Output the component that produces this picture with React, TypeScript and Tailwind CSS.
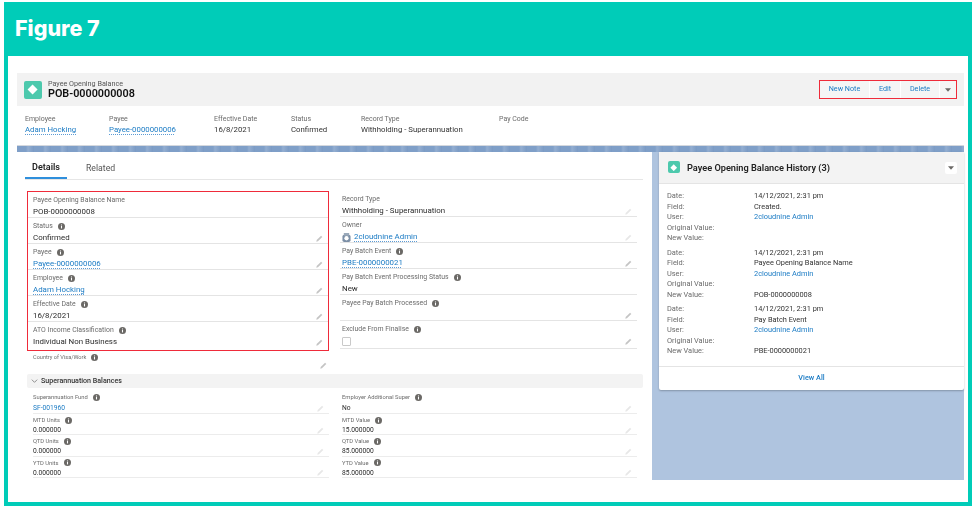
import React from "react";

const Info = () => (
  <svg viewBox="0 0 8 8" className="ml-[5px] h-[7px] w-[7px] shrink-0">
    <circle cx="4" cy="4" r="4" fill="#6b6966" />
    <rect x="3.4" y="3.4" width="1.2" height="2.8" fill="#fff" />
    <rect x="3.4" y="1.7" width="1.2" height="1.1" fill="#fff" />
  </svg>
);

const PencilIcon = ({ faint }: { faint?: boolean }) => (
  <svg viewBox="0 0 10 10" className={"h-[7px] w-[7px] shrink-0 " + (faint ? "opacity-40" : "")}>
    <path d="M0.5 9.5 L1 7.2 L7.2 1 L9 2.8 L2.8 9 Z" fill="#c4c4c4" />
  </svg>
);

const Link = ({ children }: { children: React.ReactNode }) => (
  <span className="text-[#1b7bc4] underline decoration-[#5b9bd5] decoration-dotted underline-offset-[1.5px]">{children}</span>
);

type F = { label: string; value?: React.ReactNode; info?: boolean; edit?: boolean; faint?: boolean };

const Field = ({ label, value, info = true, edit = true, faint }: F) => (
  <div className="h-[26px] border-b border-[#e4e4e4] px-[5px] pt-[3.5px]">
    <div className="flex h-[9px] items-center text-[6.9px] leading-[9px] text-[#6b6b6b]">
      {label}
      {info && <Info />}
    </div>
    <div className="mt-[1.5px] flex h-[12px] items-center justify-between text-[7.9px] leading-[12px] text-[#2b2b2b]">
      <div className="flex items-center">{value}</div>
      {edit && <PencilIcon faint={faint} />}
    </div>
  </div>
);

const Small = ({ label, value, tall }: { label: string; value: React.ReactNode; tall?: boolean }) => (
  <div className={"border-b border-[#ececec] pr-[5px] " + (tall ? "h-[21px]" : "h-[21.33px] pt-[2px]")}>
    <div className="flex h-[8px] items-center text-[5.8px] leading-[8px] text-[#6b6b6b]">
      {label}
      <Info />
    </div>
    <div className={"flex h-[10px] items-center justify-between text-[6.7px] leading-[10px] text-[#2b2b2b] " + (tall ? "mt-[2px]" : "mt-[1px]")}>
      <div>{value}</div>
      <PencilIcon faint />
    </div>
  </div>
);

const Diamond = ({ size }: { size: string }) => (
  <span className={"flex shrink-0 items-center justify-center rounded-[2px] bg-[#4dc9ad] " + size}>
    <svg viewBox="0 0 10 10" className="h-[62%] w-[62%]">
      <path d="M5 0.5 L9.5 5 L5 9.5 L0.5 5 Z" fill="#fff" />
    </svg>
  </span>
);

const Caret = () => (
  <svg viewBox="0 0 10 6" className="h-[4px] w-[6px]">
    <path d="M0 0 H10 L5 6 Z" fill="#6b6966" />
  </svg>
);

const History = ({ field, value }: { field: string; value?: string }) => (
  <div className="grid grid-cols-[87px_1fr] text-[7.4px] leading-[10.5px] text-[#6b6b6b]">
    <div>Date:</div>
    <div className="text-[#333]">14/12/2021, 2:31 pm</div>
    <div>Field:</div>
    <div className="text-[#333]">{field}</div>
    <div>User:</div>
    <div className="text-[#1b7bc4]">2cloudnine Admin</div>
    <div className="col-span-2">Original Value:</div>
    <div>New Value:</div>
    <div className="text-[#333]">{value}</div>
  </div>
);

const Highlight = ({ label, value, w }: { label: string; value?: React.ReactNode; w: string }) => (
  <div className={"flex shrink-0 flex-col " + w}>
    <div className="h-[9px] text-[7px] leading-[9px] text-[#6b6b6b]">{label}</div>
    <div className="h-[11px] text-[7.8px] leading-[11px] text-[#333]">{value}</div>
  </div>
);

const Btn = ({ children, w }: { children: React.ReactNode; w: string }) => (
  <div className={"flex h-full items-center justify-center border-r border-white text-[7.2px] text-[#1b7bc4] " + w}>
    {children}
  </div>
);

export default function App() {
  return (
    <div className="h-[510px] w-[976px] overflow-hidden bg-white pt-[2px] pl-[4px] font-['Roboto','Liberation_Sans',sans-serif]">
      <div className="flex h-[504px] w-[968px] flex-col bg-[#00ccb8] pb-[4px]">
        <div className="flex h-[54px] shrink-0 items-center pl-[11px] font-['Inter',sans-serif] text-[21.5px] font-extrabold leading-none text-white">
          Figure 7
        </div>
        <div className="mx-[4px] flex flex-1 flex-col bg-white pt-[17px] pb-[22px] pl-[9px] pr-[4px] blur-[0.35px]">
          <div className="flex h-[33px] shrink-0 items-center justify-between bg-[#f2f2f2] px-[7px]">
            <div className="flex items-center gap-[6px]">
              <Diamond size="h-[18px] w-[18px]" />
              <div>
                <div className="text-[7.2px] leading-[9px] text-[#555]">Payee Opening Balance</div>
                <div className="text-[10.8px] font-semibold leading-[12px] text-[#111]">POB-0000000008</div>
              </div>
            </div>
            <div className="flex h-[19px] w-[138px] items-center border-[1.5px] border-[#ef2b3a] bg-[#f5f5f5]">
              <Btn w="w-[50px]">New Note</Btn>
              <Btn w="w-[31px]">Edit</Btn>
              <Btn w="w-[39px]">Delete</Btn>
              <div className="flex flex-1 items-center justify-center">
                <Caret />
              </div>
            </div>
          </div>
          <div className="flex h-[39px] shrink-0 items-start pl-[8px] pt-[9px]">
            <Highlight w="w-[84px]" label="Employee" value={<Link>Adam Hocking</Link>} />
            <Highlight w="w-[105px]" label="Payee" value={<Link>Payee-0000000006</Link>} />
            <Highlight w="w-[77px]" label="Effective Date" value="16/8/2021" />
            <Highlight w="w-[70px]" label="Status" value="Confirmed" />
            <Highlight w="w-[138px]" label="Record Type" value="Withholding - Superannuation" />
            <Highlight w="w-[100px]" label="Pay Code" />
          </div>
          <div className="h-[7px] shrink-0 border-t border-[#d4d8de] bg-[#7f9fc8] bg-[repeating-linear-gradient(90deg,#7f9fc8_0px,#7f9fc8_9px,#93aed1_11px,#7a9ac4_17px)]" />
          <div className="flex flex-1 gap-[7px] bg-[#afc4df]">
            <div className="w-[635px] shrink-0 bg-white pl-[8px] pr-[9px]">
              <div className="flex h-[28px] items-end border-b border-[#e6e6e6] pr-[1px]">
                <div className="flex h-full w-[42px] items-center justify-center border-b-2 border-[#2f8fdc] pt-[6px] text-[9px] font-semibold text-[#222]">
                  Details
                </div>
                <div className="ml-[19px] flex h-full items-center pt-[6px] text-[8.7px] text-[#555]">Related</div>
              </div>
              <div className="mt-[11px] ml-[2px] grid grid-cols-[302px_1fr] gap-x-[11px]">
                <div>
                  <div className="flex h-[160px] flex-col border-[1.5px] border-[#ef2b3a] [&>*:last-child]:h-[28px] [&>*:last-child]:border-b-0">
                    <Field label="Payee Opening Balance Name" value="POB-0000000008" info={false} edit={false} />
                    <Field label="Status" value="Confirmed" />
                    <Field label="Payee" value={<Link>Payee-0000000006</Link>} />
                    <Field label="Employee" value={<Link>Adam Hocking</Link>} />
                    <Field label="Effective Date" value="16/8/2021" />
                    <Field label="ATO Income Classification" value="Individual Non Business" />
                  </div>
                  <div className="flex h-[21px] flex-col pl-[6px] pr-[2px] pt-[2px]">
                    <div className="flex h-[8px] items-center text-[5.6px] leading-[8px] text-[#6b6b6b]">
                      Country of Visa/Work
                      <Info />
                    </div>
                    <div className="mt-[1px] flex justify-end">
                      <PencilIcon />
                    </div>
                  </div>
                </div>
                <div className="h-[160px] pr-[6px] [&>*]:pl-[2px] [&>*:last-child]:h-[28px]">
                  <Field label="Record Type" value="Withholding - Superannuation" info={false} faint />
                  <Field
                    label="Owner"
                    info={false}
                    faint
                    value={
                      <span className="flex items-center gap-[3px]">
                        <svg viewBox="0 0 10 10" className="h-[9px] w-[9px]">
                          <rect x="0.5" y="2" width="9" height="8" rx="2" fill="#7c8fa6" />
                          <rect x="2" y="0" width="6" height="3" fill="#9aa9ba" />
                          <circle cx="5" cy="5.8" r="2.4" fill="#fff" />
                        </svg>
                        <Link>2cloudnine Admin</Link>
                      </span>
                    }
                  />
                  <Field label="Pay Batch Event" value={<Link>PBE-0000000021</Link>} />
                  <Field label="Pay Batch Event Processing Status" value="New" edit={false} />
                  <Field label="Payee Pay Batch Processed" />
                  <Field
                    label="Exclude From Finalise"
                    value={<span className="block h-[9px] w-[9px] rounded-[1px] border border-[#c9c9c9] bg-white" />}
                  />
                </div>
              </div>
              <div className="mt-[2px] ml-[2px] flex h-[14px] items-center gap-[3px] rounded-[2px] bg-[#f3f3f3] pl-[4px] text-[7.1px] font-medium text-[#333]">
                <svg viewBox="0 0 10 6" className="h-[4px] w-[7px]" fill="none" stroke="#777" strokeWidth="1.2">
                  <path d="M1 1 L5 5 L9 1" />
                </svg>
                Superannuation Balances
              </div>
              <div className="mt-[5px] ml-[8px] grid grid-cols-[296px_1fr] gap-x-[13px]">
                <div>
                  <Small tall label="Superannuation Fund" value={<span className="text-[#1b7bc4]">SF-001960</span>} />
                  <Small label="MTD Units" value="0.000000" />
                  <Small label="QTD Units" value="0.000000" />
                  <Small label="YTD Units" value="0.000000" />
                </div>
                <div className="pr-[6px]">
                  <Small tall label="Employer Additional Super" value="No" />
                  <Small label="MTD Value" value="15.000000" />
                  <Small label="QTD Value" value="85.000000" />
                  <Small label="YTD Value" value="85.000000" />
                </div>
              </div>
            </div>
            <div className="flex-1 self-start rounded-b-[2px] bg-white shadow-[0_1px_2px_rgba(0,0,0,0.25)]">
              <div className="flex h-[32px] items-center justify-between border-b border-[#e4e4e4] bg-[#f3f3f3] pl-[9px] pr-[7px]">
                <div className="flex items-center gap-[7px]">
                  <Diamond size="h-[12px] w-[12px]" />
                  <div className="text-[9.2px] font-semibold text-[#222]">Payee Opening Balance History (3)</div>
                </div>
                <div className="flex h-[12px] w-[12px] items-center justify-center rounded-[2px] bg-white">
                  <Caret />
                </div>
              </div>
              <div className="flex flex-col gap-[4px] pl-[8px] pt-[7px] pb-[9px]">
                <History field="Created." />
                <History field="Payee Opening Balance Name" value="POB-0000000008" />
                <History field="Pay Batch Event" value="PBE-0000000021" />
              </div>
              <div className="flex h-[24px] items-center justify-center border-t border-[#e4e4e4] text-[7.3px] font-medium text-[#1b7bc4]">
                View All
              </div>
            </div>
          </div>
        </div>
      </div>
    </div>
  );
}
